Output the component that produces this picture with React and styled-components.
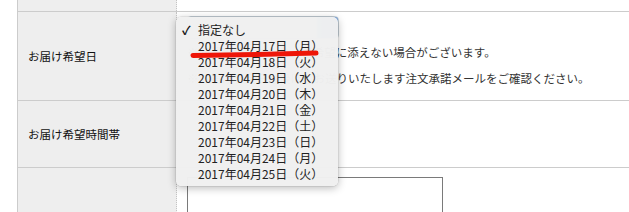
import React from 'react';
import styled, { createGlobalStyle } from 'styled-components';

const GlobalStyle = createGlobalStyle`
  html, body {
    margin: 0;
    padding: 0;
    background: #ffffff;
    overflow: hidden;
  }
  body {
    font-family: "Noto Sans CJK JP", "Noto Sans", sans-serif;
    color: #222222;
  }
`;

const Page = styled.div`
  position: relative;
  width: 629px;
  height: 212px;
  overflow: hidden;
  padding-left: 17px;
  box-sizing: border-box;
`;

const Table = styled.div`
  border-left: 1px solid #cccccc;
  margin-top: -1px;
`;

const Row = styled.div`
  display: grid;
  grid-template-columns: 159px 1fr;
  height: ${(p) => p.h}px;
  border-bottom: ${(p) => (p.last ? 'none' : '1px solid #cccccc')};
  box-sizing: border-box;
`;

const Label = styled.div`
  background: #eeeeee;
  border-right: 1px dotted #c4c4c4;
  display: flex;
  align-items: center;
  padding-left: 10px;
  font-size: 11.5px;
  color: #111111;
`;

const Cell = styled.div`
  padding: ${(p) => p.pad || '0'};
  font-size: 11.5px;
  color: #333333;
`;

const SelectBox = styled.div`
  width: 152px;
  height: 23px;
  border-radius: 4px;
  box-sizing: border-box;
  border: 1px solid #c9d4dc;
  background: linear-gradient(to right, #f2f5f6 0, #eef3f5 128px, #7eaeea 130px, #5e97e4 152px);
`;

const Note = styled.p`
  margin: 0;
  line-height: 26px;
  white-space: nowrap;
  letter-spacing: 0;
`;

const TextArea = styled.div`
  width: 256px;
  height: 60px;
  border: 1px solid #7a7a7a;
  box-sizing: border-box;
`;

const Menu = styled.ul`
  position: absolute;
  left: 176px;
  top: 17px;
  width: 162px;
  margin: 0;
  padding: 5px 0 4px;
  list-style: none;
  box-sizing: border-box;
  background: rgba(240, 240, 240, 0.98);
  border-radius: 5px;
  box-shadow: 0 2px 9px rgba(0, 0, 0, 0.28), 0 0 0 0.5px rgba(0, 0, 0, 0.12);
`;

const Item = styled.li`
  position: relative;
  height: 16px;
  line-height: 16px;
  padding-left: 22px;
  font-size: 12px;
  color: #222222;
  white-space: nowrap;
`;

const Check = styled.span`
  position: absolute;
  left: 6px;
  top: 0;
  font-size: 12px;
  font-weight: bold;
  color: #111111;
`;

const Mark = styled.svg`
  position: absolute;
  left: 189px;
  top: 48px;
`;

const dates = [
  '2017年04月17日（月）',
  '2017年04月18日（火）',
  '2017年04月19日（水）',
  '2017年04月20日（木）',
  '2017年04月21日（金）',
  '2017年04月22日（土）',
  '2017年04月23日（日）',
  '2017年04月24日（月）',
  '2017年04月25日（火）',
];

const App = () => {
  return (
    <>
      <GlobalStyle />
      <Page>
        <Table>
          <Row h={13}>
            <Label />
            <Cell />
          </Row>
          <Row h={89}>
            <Label>お届け希望日</Label>
            <Cell pad="4px 0 0 10px">
              <SelectBox />
              <Note>※交通事情等により、ご希望に添えない場合がございます。</Note>
              <Note>※お届け予定日は後ほどお送りいたします注文承諾メールをご確認ください。</Note>
            </Cell>
          </Row>
          <Row h={67}>
            <Label>お届け希望時間帯</Label>
            <Cell />
          </Row>
          <Row h={60} last>
            <Label />
            <Cell pad="9px 0 0 10px">
              <TextArea />
            </Cell>
          </Row>
        </Table>

        <Menu>
          <Item>
            <Check>✓</Check>
            指定なし
          </Item>
          {dates.map((d) => (
            <Item key={d}>{d}</Item>
          ))}
        </Menu>

        <Mark width="132" height="12" viewBox="0 0 132 12">
          <path d="M4 7.5 C40 7, 90 6, 127 5" stroke="#ee1608" strokeWidth="5" strokeLinecap="round" fill="none" />
        </Mark>
      </Page>
    </>
  );
};

export default App;
